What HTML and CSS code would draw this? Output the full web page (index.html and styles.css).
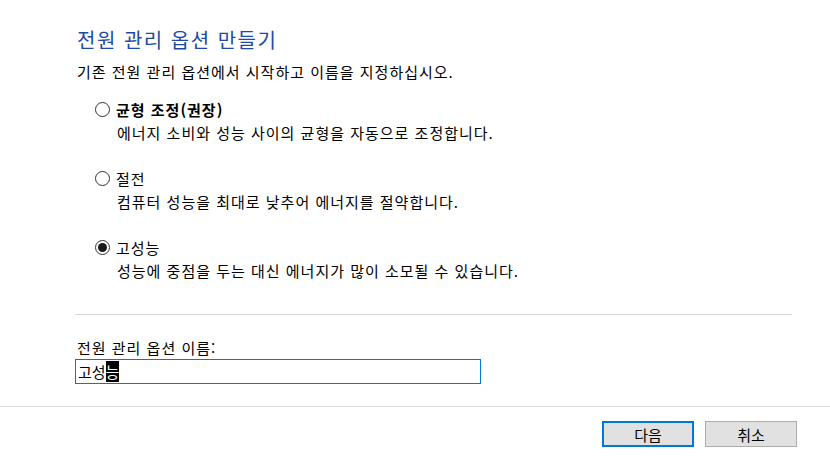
FILE: index.html
```html
<!DOCTYPE html>
<html lang="ko">
<head>
    <meta charset="UTF-8">
    <title>전원 관리 옵션 만들기</title>
    <link rel="stylesheet" href="styles.css">
</head>
<body>

<div class="page">
    <h1>전원 관리 옵션 만들기</h1>
    <p class="intro">기존 전원 관리 옵션에서 시작하고 이름을 지정하십시오.</p>

    <div class="plans">
        <div class="plan">
            <div class="plan-label"><span class="radio"></span><b>균형 조정(권장)</b></div>
            <div class="plan-desc">에너지 소비와 성능 사이의 균형을 자동으로 조정합니다.</div>
        </div>
        <div class="plan">
            <div class="plan-label"><span class="radio"></span>절전</div>
            <div class="plan-desc">컴퓨터 성능을 최대로 낮추어 에너지를 절약합니다.</div>
        </div>
        <div class="plan">
            <div class="plan-label"><span class="radio checked"></span>고성능</div>
            <div class="plan-desc">성능에 중점을 두는 대신 에너지가 많이 소모될 수 있습니다.</div>
        </div>
    </div>

    <div class="divider"></div>

    <div class="name-field">
        <div class="name-label">전원 관리 옵션 이름:</div>
        <div class="textbox">고성<span class="sel">능</span></div>
    </div>
</div>

<div class="footer">
    <button class="btn primary">다음</button>
    <button class="btn">취소</button>
</div>

</body>
</html>
```

FILE: styles.css
```css
body {
    margin: 0;
    background: #fff;
    color: #000;
    font-family: "Noto Sans CJK KR", "Noto Sans", sans-serif;
    font-size: 15px;
    letter-spacing: 1px;
}
.page {
    padding: 28px 38px 0 77px;
    height: 378px;
}
h1 {
    margin: 0;
    font-size: 20px;
    font-weight: normal;
    letter-spacing: 1.5px;
    line-height: 24px;
    color: #1c4aa2;
}
.intro {
    margin: 10px 0 0;
    line-height: 20px;
}
.plans {
    margin-top: 16px;
    padding-left: 18px;
}
.plan {
    margin-bottom: 23px;
}
.plan-label {
    display: flex;
    align-items: center;
    gap: 6px;
    line-height: 23px;
}
.plan-desc {
    padding-left: 22px;
    line-height: 23px;
}
.radio {
    width: 15px;
    height: 15px;
    box-sizing: border-box;
    border: 1px solid #333;
    border-radius: 50%;
    display: flex;
    align-items: center;
    justify-content: center;
}
.radio.checked::after {
    content: "";
    width: 9px;
    height: 9px;
    border-radius: 50%;
    background: #1a1a1a;
}
.divider {
    margin: 32px 0 0 -2px;
    border-top: 1px solid #d4d4d4;
}
.name-field {
    margin-top: 23px;
}
.name-label {
    line-height: 20px;
}
.textbox {
    margin: 1px 0 0 -2px;
    width: 402px;
    height: 23px;
    border: 1px solid #0078d7;
    padding-left: 2px;
    line-height: 23px;
    letter-spacing: 0;
}
.sel {
    background: #000;
    color: #fff;
}
.footer {
    border-top: 1px solid #dcdcdc;
    display: flex;
    justify-content: flex-end;
    gap: 11px;
    padding: 14px 33px 0 0;
}
.btn {
    width: 92px;
    height: 26px;
    background: #e1e1e1;
    border: 1px solid #adadad;
    font-family: inherit;
    font-size: 15px;
    padding: 0;
}
.btn.primary {
    border: 2px solid #0078d7;
}
```
